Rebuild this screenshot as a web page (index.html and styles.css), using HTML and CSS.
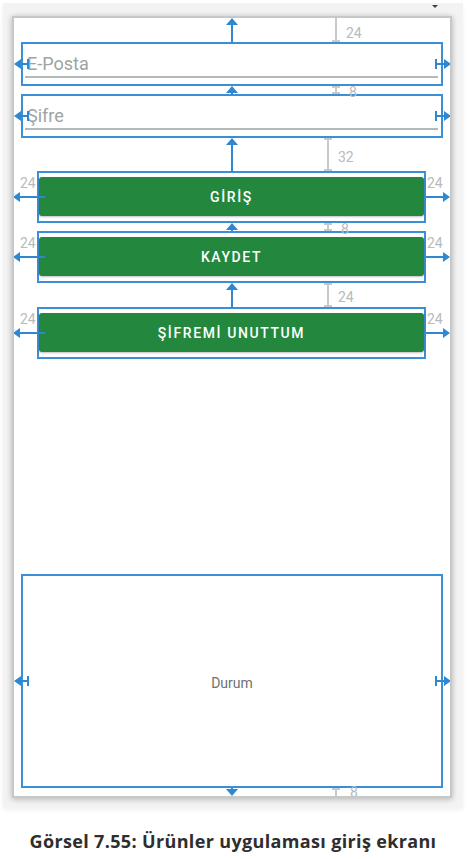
FILE: index.html
```html
<!DOCTYPE html>
<html lang="tr">
<head>
<meta charset="utf-8">
<title>Ürünler uygulaması giriş ekranı</title>
<link rel="stylesheet" href="styles.css">
</head>
<body>
<div class="panel">
  <span class="corner-mark"></span>
  <div class="frame">
    <div class="field"><span class="hint">E-Posta</span><span class="underline"></span></div>
    <div class="field"><span class="hint">Şifre</span><span class="underline"></span></div>
    <div class="btnbox"><div class="btn">GİRİŞ</div></div>
    <div class="btnbox tight"><div class="btn">KAYDET</div></div>
    <div class="btnbox loose"><div class="btn">ŞİFREMİ UNUTTUM</div></div>
    <div class="status">Durum</div>

    <div class="overlay">
      <span class="gm gm-1"></span><span class="gl gl-1">24</span>
      <span class="gm gm-2"></span><span class="gl gl-2">8</span>
      <span class="gm gm-3"></span><span class="gl gl-3">32</span>
      <span class="gm gm-4"></span><span class="gl gl-4">8</span>
      <span class="gm gm-5"></span><span class="gl gl-5">24</span>
      <span class="gm gm-6"></span><span class="gl gl-6">8</span>

      <span class="va va-1"></span>
      <span class="va va-2"></span>
      <span class="va va-3"></span>
      <span class="va va-4"></span>
      <span class="va va-5"></span>
      <span class="va va-down"></span>

      <span class="hf hf-left hf-e"></span><span class="hf hf-right hf-e"></span>
      <span class="hf hf-left hf-s"></span><span class="hf hf-right hf-s"></span>
      <span class="hf hf-left hf-d"></span><span class="hf hf-right hf-d"></span>

      <span class="hb hb-left hb-g"></span><span class="hb hb-right hb-g"></span>
      <span class="hb hb-left hb-k"></span><span class="hb hb-right hb-k"></span>
      <span class="hb hb-left hb-u"></span><span class="hb hb-right hb-u"></span>

      <span class="sl sl-left sl-g">24</span><span class="sl sl-right sl-g">24</span>
      <span class="sl sl-left sl-k">24</span><span class="sl sl-right sl-k">24</span>
      <span class="sl sl-left sl-u">24</span><span class="sl sl-right sl-u">24</span>
    </div>
  </div>
</div>
<p class="caption">Görsel 7.55: Ürünler uygulaması giriş ekranı</p>
</body>
</html>
```
FILE: styles.css
```css
:root {
  --blue: #2f87d2;
  --blue-line: #3b8fd6;
  --gray-mark: #c6caca;
  --gray-text: #b7bbbb;
}

html, body {
  margin: 0;
  padding: 0;
  background: #ffffff;
}

body {
  width: 470px;
  height: 859px;
  overflow: hidden;
  font-family: Roboto, "Noto Sans", "Liberation Sans", sans-serif;
}

.panel {
  position: relative;
  margin: 3px 0 0 3px;
  width: 460px;
  height: 804px;
  box-sizing: border-box;
  padding: 13px 0 0 9px;
  background: #f3f3f3;
  box-shadow: 0 3px 5px rgba(0, 0, 0, 0.06);
}

.corner-mark {
  position: absolute;
  left: 429px;
  top: 2px;
  width: 0;
  height: 0;
  border-left: 3px solid transparent;
  border-right: 3px solid transparent;
  border-top: 3px solid #3e3e3e;
}

.frame {
  position: relative;
  width: 440px;
  height: 782px;
  box-sizing: border-box;
  border: 2px solid #c5cac8;
  background: #ffffff;
  box-shadow: 0 1px 6px rgba(0, 0, 0, 0.28);
  display: flex;
  flex-direction: column;
  padding: 24px 7px 8px 7px;
  overflow: hidden;
}

/* text fields */
.field {
  height: 44px;
  box-sizing: border-box;
  border: 2px solid var(--blue-line);
  padding: 9px 3px 0 2px;
  display: flex;
  flex-direction: column;
}

.field + .field {
  margin-top: 8px;
}

.hint {
  font-size: 18px;
  line-height: 21px;
  color: #9ea4a4;
  padding-left: 2px;
}

.underline {
  margin-top: 2px;
  height: 2px;
  background: #b3bab8;
}

/* buttons */
.btnbox {
  margin: 33px 17px 0 16px;
  height: 52px;
  box-sizing: border-box;
  border: 2px solid var(--blue-line);
  padding: 4px 0 5px;
  display: flex;
}

.btnbox.tight {
  margin-top: 8px;
}

.btnbox.loose {
  margin-top: 24px;
}

.btn {
  flex: 1;
  display: flex;
  align-items: center;
  justify-content: center;
  background: #23883e;
  border-radius: 3px;
  box-shadow: 0 1px 2px rgba(0, 0, 0, 0.25);
  color: #ffffff;
  font-size: 14px;
  font-weight: 500;
  letter-spacing: 1.6px;
}

/* status text view */
.status {
  margin-top: auto;
  height: 214px;
  box-sizing: border-box;
  border: 2px solid var(--blue-line);
  display: flex;
  align-items: center;
  justify-content: center;
  padding-top: 3px;
  font-size: 14px;
  color: #6f7171;
}

/* blueprint constraint overlay */
.overlay {
  position: absolute;
  left: 0;
  top: 0;
  width: 0;
  height: 0;
}

/* gray margin markers */
.gm {
  position: absolute;
  width: 2px;
  background: var(--gray-mark);
}
.gm::before,
.gm::after {
  content: "";
  position: absolute;
  left: -3px;
  width: 8px;
  height: 2px;
  background: var(--gray-mark);
}
.gm::before { top: 0; }
.gm::after { bottom: 0; }

.gm-1 { left: 321px; top: -2px; height: 26px; }
.gm-2 { left: 321px; top: 68px; height: 8px; }
.gm-3 { left: 313px; top: 120px; height: 33px; }
.gm-4 { left: 313px; top: 205px; height: 8px; }
.gm-5 { left: 313px; top: 265px; height: 24px; }
.gm-6 { left: 321px; top: 770px; height: 10px; }

.gl,
.sl {
  position: absolute;
  font-size: 14px;
  line-height: 16px;
  color: var(--gray-text);
}

.gl-1 { left: 332px; top: 7px; }
.gl-2 { left: 335px; top: 66px; }
.gl-3 { left: 324px; top: 131px; }
.gl-4 { left: 327px; top: 203px; }
.gl-5 { left: 324px; top: 271px; }
.gl-6 { left: 336px; top: 766px; }

/* vertical blue arrows */
.va {
  position: absolute;
  left: 212px;
  width: 12px;
}
.va::before {
  content: "";
  position: absolute;
  left: 0;
  top: 0;
  width: 0;
  height: 0;
  border-left: 6px solid transparent;
  border-right: 6px solid transparent;
  border-bottom: 7px solid var(--blue);
}
.va::after {
  content: "";
  position: absolute;
  left: 5px;
  top: 6px;
  bottom: 0;
  width: 2px;
  background: var(--blue);
}

.va-1 { top: 0; height: 24px; }
.va-2 { top: 68px; height: 8px; }
.va-3 { top: 120px; height: 33px; }
.va-4 { top: 205px; height: 8px; }
.va-5 { top: 265px; height: 24px; }

.va-down { top: 770px; height: 8px; }
.va-down::before {
  top: auto;
  bottom: 0;
  border-bottom: 0;
  border-top: 7px solid var(--blue);
}
.va-down::after {
  top: 0;
  bottom: 6px;
}

/* horizontal arrows with end bar (fields) */
.hf {
  position: absolute;
  width: 16px;
  height: 10px;
}
.hf::before {
  content: "";
  position: absolute;
  top: 0;
  width: 0;
  height: 0;
  border-top: 5px solid transparent;
  border-bottom: 5px solid transparent;
}
.hf::after {
  content: "";
  position: absolute;
  top: 0;
  width: 9px;
  height: 10px;
  box-sizing: border-box;
  background: linear-gradient(var(--blue), var(--blue)) center / 100% 2px no-repeat;
}
.hf-left { left: 0; }
.hf-left::before {
  left: 0;
  border-right: 7px solid var(--blue);
}
.hf-left::after {
  left: 6px;
  border-right: 2px solid var(--blue);
}
.hf-right { left: 421px; }
.hf-right::before {
  right: 0;
  border-left: 7px solid var(--blue);
}
.hf-right::after {
  left: 0;
  border-left: 2px solid var(--blue);
}

.hf-e { top: 41px; }
.hf-s { top: 93px; }
.hf-d { top: 658px; }

/* horizontal arrows for buttons */
.hb {
  position: absolute;
  height: 10px;
}
.hb::before {
  content: "";
  position: absolute;
  top: 0;
  width: 0;
  height: 0;
  border-top: 5px solid transparent;
  border-bottom: 5px solid transparent;
}
.hb::after {
  content: "";
  position: absolute;
  top: 4px;
  height: 2px;
  background: var(--blue);
}
.hb-left { left: -1px; width: 32px; }
.hb-left::before {
  left: 0;
  border-right: 7px solid var(--blue);
}
.hb-left::after {
  left: 6px;
  right: 0;
}
.hb-right { left: 412px; width: 24px; }
.hb-right::before {
  right: 0;
  border-left: 7px solid var(--blue);
}
.hb-right::after {
  left: 0;
  right: 6px;
}

.hb-g { top: 174px; }
.hb-k { top: 234px; }
.hb-u { top: 310px; }

.sl-left { left: 6px; }
.sl-right { left: 413px; }
.sl-g { top: 157px; }
.sl-k { top: 217px; }
.sl-u { top: 293px; }

.caption {
  margin: 22px 0 0;
  padding-right: 4px;
  text-align: center;
  font-family: "Open Sans", "Liberation Sans", sans-serif;
  font-weight: 700;
  font-size: 18px;
  line-height: 24px;
  letter-spacing: 0.35px;
  color: #2e2e2e;
}
```
